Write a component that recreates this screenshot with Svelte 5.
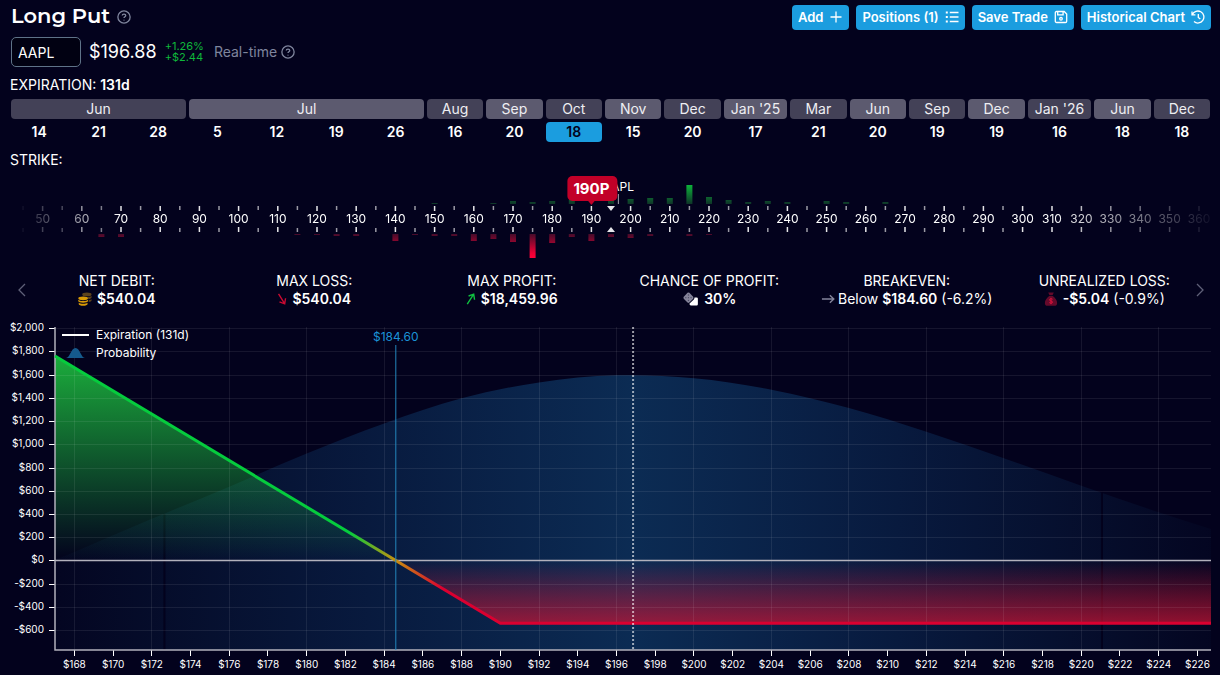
<script>
  let ticker = $state('AAPL');
  let selected = $state('Oct-18');
  let rulerWidth = $state(1220);
  let chartWidth = $state(1220);

  const price = 196.88;
  const strike = 190;
  const breakeven = 184.6;
  const debit = 540.04;

  const months = [
    { name: 'Jun', days: [14, 21, 28] },
    { name: 'Jul', days: [5, 12, 19, 26] },
    { name: 'Aug', days: [16] },
    { name: 'Sep', days: [20] },
    { name: 'Oct', days: [18] },
    { name: 'Nov', days: [15] },
    { name: 'Dec', days: [20] },
    { name: "Jan '25", days: [17] },
    { name: 'Mar', days: [21] },
    { name: 'Jun', days: [20], year: 25 },
    { name: 'Sep', days: [19], year: 25 },
    { name: 'Dec', days: [19], year: 25 },
    { name: "Jan '26", days: [16] },
    { name: 'Jun', days: [18], year: 26 },
    { name: 'Dec', days: [18], year: 26 }
  ];

  function dayKey(month, day) {
    return `${month.name}${month.year || ''}-${day}`;
  }

  // Strike ruler: 5 wide steps up to 300, then 10 wide steps
  const strikes = [];
  for (let s = 45; s <= 300; s += 5) strikes.push(s);
  for (let s = 310; s <= 360; s += 10) strikes.push(s);

  const callInterest = [
    [150, 1], [165, 1], [170, 3], [175, 2], [180, 3], [185, 4], [195, 5], [200, 5], [205, 6],
    [210, 6], [215, 19], [220, 7], [225, 4], [230, 2], [235, 3], [240, 2], [250, 3], [255, 2], [265, 2]
  ];
  const putInterest = [
    [65, 3], [70, 3], [115, 1], [120, 1], [125, 2], [130, 2], [140, 7], [145, 1], [150, 2],
    [155, 2], [160, 7], [165, 5], [170, 8], [175, 24], [180, 9], [185, 3], [190, 7], [195, 3],
    [200, 4], [205, 2], [215, 2], [220, 1]
  ];

  function strikeX(s) {
    const steps = s <= 300 ? (s - 45) / 5 : 51 + ((s - 300) / 10) * 1.5;
    return 23 + (steps * (rulerWidth - 44)) / 60;
  }

  // Payoff chart
  const top = 7;
  const bottom = 330;
  const left = 55;
  const minPrice = 167;
  const maxPrice = 226.7;
  const maxValue = 2010;
  const minValue = -771;

  let right = $derived(chartWidth - 9);

  function px(p) {
    return left + ((p - minPrice) / (maxPrice - minPrice)) * (right - left);
  }

  function py(v) {
    return top + ((maxValue - v) / (maxValue - minValue)) * (bottom - top);
  }

  const values = [];
  for (let v = 2000; v >= -600; v -= 200) values.push(v);
  const prices = [];
  for (let p = 168; p <= 226; p += 2) prices.push(p);

  function money(v) {
    return (v < 0 ? '-$' : '$') + Math.abs(v).toLocaleString('en-US');
  }

  const density = [
    [167, 5], [168, 73], [172, 358], [176, 635], [180, 920], [184, 1180], [188, 1396],
    [192, 1533], [196, 1594], [200, 1568], [204, 1470], [208, 1312], [212, 1108],
    [216, 879], [220, 644], [224, 415], [226.7, 271]
  ];

  function smooth(points) {
    let d = `M${points[0][0]},${points[0][1]}`;
    for (let i = 0; i < points.length - 1; i++) {
      const a = points[Math.max(i - 1, 0)];
      const b = points[i];
      const c = points[i + 1];
      const e = points[Math.min(i + 2, points.length - 1)];
      const h = c[0] - b[0];
      const m1 = (c[1] - a[1]) / (c[0] - a[0]);
      const m2 = (e[1] - b[1]) / (e[0] - b[0]);
      d += `C${b[0] + h / 3},${b[1] + (m1 * h) / 3} ${c[0] - h / 3},${c[1] - (m2 * h) / 3} ${c[0]},${c[1]}`;
    }
    return d;
  }

  let densityPath = $derived(
    smooth(density.map(([p, v]) => [px(p), py(v)])) + `V${bottom}H${left}Z`
  );
  let maxProfit = (breakeven - minPrice) * 100;
</script>

{#snippet help()}
  <svg class="help" viewBox="0 0 16 16" aria-hidden="true">
    <circle cx="8" cy="8" r="7" />
    <path d="M6 6.4C6 5.3 6.8 4.7 8 4.7s2 .7 2 1.7c0 1.4-2 1.4-2 2.8" />
    <path d="M8 11v.9" />
  </svg>
{/snippet}

<main>
  <header>
    <h1>Long Put</h1>
    <button class="plain" aria-label="About long puts">{@render help()}</button>
    <nav>
      <button class="action">
        Add
        <svg viewBox="0 0 14 14"><path d="M7 1.5v11M1.5 7h11" /></svg>
      </button>
      <button class="action">
        Positions (1)
        <svg viewBox="0 0 14 14"><path d="M4.8 2.5H13.5M4.8 7H13.5M4.8 11.5H13.5" /><path d="M.8 2.5h2M.8 7h2M.8 11.5h2" stroke-width="2" /></svg>
      </button>
      <button class="action">
        Save Trade
        <svg viewBox="0 0 14 14"><path d="M2.5 1.5h7.7l2.5 2.5v7.2c0 .8-.5 1.3-1.3 1.3H2.6c-.8 0-1.3-.5-1.3-1.3V2.7c0-.7.5-1.2 1.2-1.2zM3.7 1.8v3h5.4v-3" /><circle cx="7" cy="8.8" r="1.3" /></svg>
      </button>
      <button class="action">
        Historical Chart
        <svg viewBox="0 0 14 14"><path d="M1 1.5v3.4h3.4M1.4 4.6A6 6 0 1 1 3 11.6M7.3 4v3.4l2 1.6" /></svg>
      </button>
    </nav>
  </header>

  <section class="quote">
    <input type="text" aria-label="Symbol" bind:value={ticker} />
    <span class="price">${price}</span>
    <span class="change"><span>+1.26%</span><span>+$2.44</span></span>
    <span class="feed">Real-time</span>
    <button class="plain" aria-label="About real-time quotes">{@render help()}</button>
  </section>

  <h2>EXPIRATION: <b>131d</b></h2>
  <section class="months">
    {#each months as month, i}
      <div style="flex: {month.days.length} 1 {(month.days.length - 1) * 3}px">
        <div class="name" class:light={i % 2 === 1}>{month.name}</div>
        <div class="days">
          {#each month.days as day}
            <button
              class="day"
              class:active={selected === dayKey(month, day)}
              onclick={() => (selected = dayKey(month, day))}>{day}</button>
          {/each}
        </div>
      </div>
    {/each}
  </section>

  <h2>STRIKE:</h2>
  <div class="ruler" bind:clientWidth={rulerWidth}>
    <svg width={rulerWidth} height="94">
      <defs>
        <linearGradient id="calls" gradientUnits="userSpaceOnUse" x1="0" y1="15" x2="0" y2="34">
          <stop offset="0" stop-color="#0db33a" />
          <stop offset="1" stop-color="#0e3528" />
        </linearGradient>
        <linearGradient id="puts" gradientUnits="userSpaceOnUse" x1="0" y1="64" x2="0" y2="88">
          <stop offset="0" stop-color="#470b2a" />
          <stop offset="0.8" stop-color="#ee0035" />
          <stop offset="1" stop-color="#ff0038" />
        </linearGradient>
        <linearGradient id="fade">
          <stop offset="0.01" stop-color="#000" />
          <stop offset="0.1" stop-color="#fff" />
          <stop offset="0.86" stop-color="#fff" />
          <stop offset="1" stop-color="#000" />
        </linearGradient>
        <mask id="edges" maskUnits="userSpaceOnUse" x="0" y="0" width={rulerWidth} height="94">
          <rect width={rulerWidth} height="94" fill="url(#fade)" />
        </mask>
      </defs>
      <g mask="url(#edges)">
        {#each strikes as s}
          {#if s !== 195}
            <path class="tick" class:minor={s % 10} d="M{strikeX(s)},36v{s % 10 ? 4 : 5}M{strikeX(s)},62v{s % 10 ? -4 : -5}" />
          {/if}
          {#if s % 10 === 0}
            <text x={strikeX(s)} y="53">{s}</text>
          {/if}
        {/each}
      </g>
      {#each callInterest as [s, h]}
        <rect x={strikeX(s) - 3} y={34 - h} width="6" height={h} fill="url(#calls)" />
      {/each}
      {#each putInterest as [s, h]}
        <rect x={strikeX(s) - 3} y="64" width="6" height={h} fill="url(#puts)" />
      {/each}
      <path class="here" d="M{strikeX(195) - 4},36h8l-4,5zM{strikeX(195) - 4},62h8l-4,-5z" />
      <path class="spot" d="M{strikeX(price)},24v10" />
      <text x={strikeX(price)} y="21">{ticker}</text>
      <path class="pill" d="M{strikeX(strike) - 4},30h8l-4,5z" />
      <rect class="pill" x={strikeX(strike) - 24} y="6" width="50" height="25" rx="5" />
      <text class="pick" x={strikeX(strike)} y="24">{strike}P</text>
    </svg>
  </div>

  <section class="stats">
    <button class="plain arrow" aria-label="Previous">
      <svg viewBox="0 0 8 14"><path d="M7 1L1 7l6 6" /></svg>
    </button>
    <dl>
      <div>
        <dt>NET DEBIT:</dt>
        <dd>
          <svg class="icon" viewBox="0 0 15 15">
            <g fill="#5d431c">
              <ellipse cx="9.5" cy="2.6" rx="5" ry="2" />
              <path d="M10 5.4c2.3 0 4-.6 4.5-1.4v2c0 .9-1.5 1.6-3.2 1.8zM11.5 8.6c1.5-.2 2.600-.6 3-1.200v1.800c0 .8-1.300 1.400-3 1.600z" />
            </g>
            <g fill="#d99a05">
              <ellipse cx="5.5" cy="6.8" rx="5.2" ry="2" />
              <path d="M.3 8.200c.8 1 2.800 1.500 5.200 1.500s4.400-.5 5.200-1.500v1.500c0 1-2.400 1.700-5.200 1.700S.3 10.700.3 9.700zM.8 11.400c1 .8 2.700 1.100 4.700 1.100s3.700-.3 4.700-1.100v1.800c0 .9-2.100 1.600-4.700 1.600s-4.700-.7-4.700-1.600z" />
            </g>
          </svg>
          <b>$540.04</b>
        </dd>
      </div>
      <div>
        <dt>MAX LOSS:</dt>
        <dd>
          <svg class="icon slim loss" viewBox="0 0 10 15"><path d="M1.3 2l6.500 10.500M8.800 6.700l-.9 6-5.600-2.200" /></svg>
          <b>$540.04</b>
        </dd>
      </div>
      <div>
        <dt>MAX PROFIT:</dt>
        <dd>
          <svg class="icon slim gain" viewBox="0 0 10 15"><path d="M1 13L7.700 2.500M2.400 4.300l5.500-2 .9 6" /></svg>
          <b>$18,459.96</b>
        </dd>
      </div>
      <div>
        <dt>CHANCE OF PROFIT:</dt>
        <dd>
          <svg class="icon dice" viewBox="0 0 16 15">
            <path fill="#85849a" d="M4.800.9q1-.8 2 0l4 4.200q.8 1 0 2l-4 4.200q-1 .8-2 0L.8 7.100q-.8-1 0-2z" />
            <g fill="#4b4a64"><circle cx="5.8" cy="3.2" r=".7" /><circle cx="3" cy="6.1" r=".7" /><circle cx="5.8" cy="6.1" r=".7" /><circle cx="8.6" cy="6.1" r=".7" /><circle cx="5.8" cy="9" r=".7" /></g>
            <path fill="#fff" d="M12.300 5.800h2.200q1.400 0 1.400 1.200v6.100q0 1.300-1.300 1.300H8.400q-1.400 0-1.400-1.200v-.9l4.600-4.300q.7-.9.700-2.200z" />
          </svg>
          <b>30%</b>
        </dd>
      </div>
      <div>
        <dt>BREAKEVEN:</dt>
        <dd>
          <svg class="icon flat" viewBox="0 0 14 15"><path d="M.5 7.500h12.700M9 3.500l4.200 4-4.200 4" /></svg>
          <span>Below <b>$184.60</b> (-6.2%)</span>
        </dd>
      </div>
      <div>
        <dt>UNREALIZED LOSS:</dt>
        <dd>
          <svg class="icon" viewBox="0 0 15 15">
            <path fill="#640a2b" d="M4.500.5h6l-1.400 3h-3.200zM5.500 4.300h4c2.500 2 4.600 4.600 4.600 7.400 0 2.100-1.100 3.100-3.100 3.100H4c-2 0-3.100-1-3.100-3.100 0-2.800 2.100-5.400 4.600-7.400z" />
            <path fill="none" stroke="#e0113c" d="M9.200 7.800c-.9-.8-3.300-.8-3.300.7 0 1.600 3.300.7 3.300 2.300 0 1.400-2.500 1.500-3.500.5M7.500 6.300v6.700" />
          </svg>
          <span><b>-$5.04</b> (-0.9%)</span>
        </dd>
      </div>
    </dl>
    <button class="plain arrow" aria-label="Next">
      <svg viewBox="0 0 8 14"><path d="M1 1l6 6-6 6" /></svg>
    </button>
  </section>

  <div class="chart" bind:clientWidth={chartWidth}>
    <svg width={chartWidth} height="355">
      <defs>
        <linearGradient id="odds">
          <stop offset="0" stop-color="#1d78b0" stop-opacity="0.03" />
          <stop offset="0.25" stop-color="#1a72b8" stop-opacity="0.2" />
          <stop offset="0.5" stop-color="#1a72b0" stop-opacity="0.37" />
          <stop offset="0.75" stop-color="#1a72b8" stop-opacity="0.2" />
          <stop offset="1" stop-color="#1d78b0" stop-opacity="0.03" />
        </linearGradient>
        <linearGradient id="profit" x1="0" y1="0" x2="0" y2="1">
          <stop offset="0" stop-color="#1bad3c" />
          <stop offset="1" stop-color="#1bad3c" stop-opacity="0" />
        </linearGradient>
        <linearGradient id="loss" x1="0" y1="0" x2="0" y2="1">
          <stop offset="0" stop-color="#c81434" stop-opacity="0" />
          <stop offset="1" stop-color="#c81434" stop-opacity="0.72" />
        </linearGradient>
        <linearGradient id="payoff" gradientUnits="userSpaceOnUse" x1={px(182.2)} y1="0" x2={px(187)} y2="0">
          <stop offset="0" stop-color="#05cc3d" />
          <stop offset="0.5" stop-color="#c8900f" />
          <stop offset="1" stop-color="#db0030" />
        </linearGradient>
      </defs>

      <path fill="url(#odds)" d={densityPath} />
      <path class="sigma" d="M{px(172.65)},{py(400)}V{bottom}M{px(221.07)},{py(600)}V{bottom}" />
      <path fill="url(#profit)" d="M{left},{py(maxProfit)}L{px(breakeven)},{py(0)}H{left}Z" />
      <path fill="url(#loss)" d="M{px(breakeven)},{py(0)}L{px(strike)},{py(-debit)}H{right}V{py(0)}Z" />

      {#each values as v}
        <path class="grid" d="M{left},{Math.round(py(v)) + 0.5}H{right}" />
        <path class="mark" d="M{left - 6},{Math.round(py(v)) + 0.5}h6" />
        <text class="value" x={left - 11} y={py(v) + 3}>{money(v)}</text>
      {/each}
      {#each prices as p}
        {#if p % 4 === 0}
          <path class="grid" d="M{Math.floor(px(p)) + 0.5},{top}V{bottom}" />
        {/if}
        <path class="mark" d="M{Math.floor(px(p)) + 0.5},{bottom}v6" />
        <text x={px(p)} y={bottom + 18}>${p}</text>
      {/each}

      <path class="axis" d="M{left},{top}V{bottom}H{right}M{left},{py(0)}H{right}" />
      <path class="payoff" d="M{left},{py(maxProfit)}L{px(strike)},{py(-debit)}H{right}" />
      <path class="now" d="M{px(price) - 0.5},{top}V{bottom}" />
      <path class="even" d="M{px(breakeven)},25V{bottom}" />
      <text class="label" x={px(breakeven)} y="21">$184.60</text>

      <path class="key" d="M62,15h27" />
      <text class="legend" x="96" y="19">Expiration (131d)</text>
      <path class="bell" d="M66,38c4,0 5,-10 9.500,-10s5.500,10 9.500,10z" />
      <text class="legend" x="96" y="37">Probability</text>
    </svg>
  </div>
</main>

<style>
  :global(body) {
    margin: 0;
    background: #03021d;
  }

  main {
    color: #fff;
    font-family: Inter, sans-serif;
    font-size: 14px;
    line-height: 18px;
  }

  button,
  input {
    font: inherit;
    color: inherit;
  }

  button {
    border: 0;
    padding: 0;
    background: none;
    cursor: pointer;
  }

  header {
    display: flex;
    align-items: center;
    height: 34px;
    padding: 0 9px 0 11px;
  }

  h1 {
    margin: 0 7px 2px 0;
    font-family: Montserrat, Inter, sans-serif;
    font-size: 21px;
    font-weight: 600;
    line-height: 24px;
  }

  .plain {
    display: flex;
    color: #7f859d;
  }

  .help {
    width: 14px;
    height: 14px;
    fill: none;
    stroke: currentColor;
    stroke-width: 1.5;
  }

  nav {
    display: flex;
    gap: 7px;
    margin-left: auto;
  }

  .action {
    display: flex;
    align-items: center;
    gap: 6px;
    height: 25px;
    padding: 0 6px;
    border-radius: 4px;
    background: #1b9ddf;
    font-size: 13px;
    font-weight: 600;
    white-space: nowrap;
  }

  .action svg {
    width: 14px;
    height: 14px;
    fill: none;
    stroke: #fff;
    stroke-width: 1.3;
  }

  .quote {
    display: flex;
    align-items: center;
    height: 36px;
    padding: 0 11px;
  }

  .quote input {
    box-sizing: border-box;
    width: 70px;
    height: 30px;
    margin-right: 8px;
    padding: 0 6px;
    border: 1px solid #5f7388;
    border-radius: 5px;
    background: #010112;
  }

  .price {
    font-size: 18px;
  }

  .change {
    display: flex;
    flex-direction: column;
    margin: 0 10px 0 8px;
    color: #0fb83a;
    font-size: 11px;
    line-height: 11px;
  }

  .feed {
    margin-right: 4px;
    color: #7f859d;
  }

  h2 {
    margin: 0;
    padding: 6px 10px 1px;
    font-size: 14px;
    font-weight: 400;
    line-height: 18px;
  }

  b {
    font-weight: 600;
  }

  .months {
    display: flex;
    gap: 3px;
    padding: 4px 10px 3px 11px;
  }

  .name {
    height: 20px;
    padding: 0 7px;
    border-radius: 4px;
    background: #434157;
    line-height: 20px;
    text-align: center;
    white-space: nowrap;
    color: #eeeef2;
  }

  .name.light {
    background: #5c5a6f;
  }

  .days {
    display: flex;
    gap: 3px;
    margin-top: 3px;
  }

  .day {
    flex: 1;
    height: 20px;
    border-radius: 4px;
    font-weight: 600;
  }

  .day.active {
    background: #1b9ddf;
    color: #03021d;
  }

  svg {
    display: block;
  }

  text {
    fill: #fff;
    font-size: 12px;
    text-anchor: middle;
  }

  .tick {
    stroke: #fff;
    stroke-width: 1.5;
    opacity: 0.9;
  }

  .tick.minor {
    opacity: 0.6;
  }

  .here {
    fill: #e6e6ea;
  }

  .spot {
    stroke: #a5a5b0;
  }

  .pill {
    fill: #c20028;
  }

  .pick {
    font-size: 15px;
    font-weight: 700;
  }

  .stats {
    display: flex;
    align-items: center;
    justify-content: space-between;
    padding: 8px 16px 0 18px;
  }

  .arrow svg {
    width: 8px;
    height: 14px;
    fill: none;
    stroke: #5f6078;
    stroke-width: 1.3;
  }

  dl {
    display: grid;
    grid-template-columns: repeat(6, 1fr);
    flex: 1;
    margin: 0 -7px 0 -8px;
    text-align: center;
    white-space: nowrap;
  }

  dd {
    display: flex;
    align-items: center;
    justify-content: center;
    gap: 5px;
    margin: 0;
  }

  .icon {
    width: 14px;
    height: 14px;
  }

  .slim {
    width: 10px;
  }

  .loss,
  .gain,
  .flat {
    fill: none;
    stroke: #c90a32;
    stroke-width: 1.5;
  }

  .gain {
    stroke: #0fc040;
  }

  .flat {
    margin-right: -2px;
    stroke: #84849a;
  }

  .dice {
    width: 17px;
  }

  .chart {
    margin-top: 12px;
  }

  .chart text {
    font-size: 10px;
  }

  .chart .value {
    text-anchor: end;
  }

  .chart .label {
    fill: #1b93d6;
    font-size: 12px;
  }

  .chart .legend {
    font-size: 12px;
    text-anchor: start;
  }

  .grid {
    stroke: #fff;
    stroke-opacity: 0.08;
  }

  .mark {
    stroke: #fff;
  }

  .axis {
    fill: none;
    stroke: #b2b1bc;
    stroke-width: 1.5;
  }

  .sigma {
    stroke: #03021d;
    stroke-width: 2;
  }

  .payoff {
    fill: none;
    stroke: url(#payoff);
    stroke-width: 3;
  }

  .now {
    stroke: #fff;
    stroke-opacity: 0.6;
    stroke-width: 2;
    stroke-dasharray: 2;
  }

  .even {
    stroke: #2487bd;
  }

  .key {
    stroke: #fff;
    stroke-width: 2;
  }

  .bell {
    fill: #155a8c;
  }
</style>
